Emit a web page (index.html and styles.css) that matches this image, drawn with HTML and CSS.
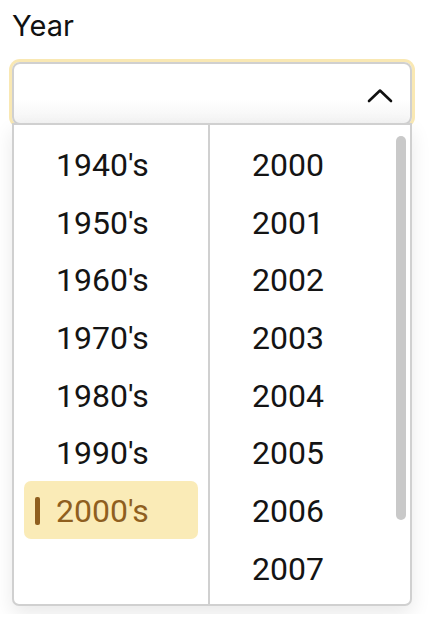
FILE: index.html
```html
<!DOCTYPE html>
<html lang="en">
<head>
    <meta charset="UTF-8">
    <meta name="viewport" content="width=device-width, initial-scale=1.0">
    <title>Year picker</title>
    <link rel="stylesheet" href="styles.css">
</head>
<body>
    <div class="field-label">Year</div>
    <div class="select">
        <div class="select-trigger">
            <svg class="chevron" width="26" height="15" viewBox="0 0 26 15">
                <path d="M2 13 L13 2.5 L24 13" fill="none" stroke="#111" stroke-width="2.6" stroke-linecap="round" stroke-linejoin="round"/>
            </svg>
        </div>

        <div class="select-menu">
            <div class="column decades">
                <div class="option">1940's</div>
                <div class="option">1950's</div>
                <div class="option">1960's</div>
                <div class="option">1970's</div>
                <div class="option">1980's</div>
                <div class="option">1990's</div>
                <div class="option selected">2000's</div>
            </div>
            <div class="years">
                <div class="column year-list">
                    <div class="option">2000</div>
                    <div class="option">2001</div>
                    <div class="option">2002</div>
                    <div class="option">2003</div>
                    <div class="option">2004</div>
                    <div class="option">2005</div>
                    <div class="option">2006</div>
                    <div class="option">2007</div>
                </div>
                <div class="scroll-track">
                    <div class="scroll-thumb"></div>
                </div>
            </div>
        </div>
    </div>
</body>
</html>
```

FILE: styles.css
```css
body {
    font-family: Inter, "Liberation Sans", sans-serif;
    background-color: #ffffff;
    color: #111;
    margin: 0;
    padding: 8px 12px;
}

.field-label {
    font-size: 29px;
    line-height: 36px;
    margin-bottom: 18px;
}

.select {
    width: 400px;
}

.select-trigger {
    display: flex;
    align-items: center;
    justify-content: flex-end;
    box-sizing: border-box;
    height: 63px;
    padding-right: 17px;
    border: 2px solid #d0d0d0;
    border-radius: 8px;
    background: linear-gradient(#ffffff 60%, #f4f4f4);
    box-shadow: 0 0 0 3px #f9e8b3;
}

.chevron {
    display: block;
    margin-top: 3px;
}

/* menu de opcoes sobre o campo */
.select-menu {
    position: relative;
    margin-top: -2px;
    height: 483px;
    box-sizing: border-box;
    display: flex;
    background-color: #ffffff;
    border: 2px solid #d0d0d0;
    border-radius: 0 0 7px 7px;
    box-shadow: 0 8px 20px rgba(0, 0, 0, 0.09);
}

.column {
    padding: 10px;
    font-family: Roboto, "Liberation Sans", sans-serif;
    font-size: 32px;
    color: #141414;
}

.decades {
    width: 174px;
    flex: none;
    border-right: 2px solid #d0d0d0;
}

.years {
    flex: 1;
    display: flex;
    overflow: hidden;
}

.year-list {
    flex: 1;
    padding-right: 0;
}

.scroll-track {
    width: 10px;
    padding: 11px 4px 0 0;
}

.scroll-thumb {
    height: 384px;
    border-radius: 5px;
    background-color: #c9c9c9;
}

.option {
    position: relative;
    height: 57.7px;
    line-height: 61px;
    padding-left: 32px;
    border-radius: 7px;
}

.option.selected {
    background-color: #faebb7;
    color: #8f5f1f;
}

.option.selected::before {
    content: "";
    position: absolute;
    left: 11px;
    top: 16px;
    width: 5px;
    height: 28px;
    border-radius: 2px;
    background-color: #8f5f1f;
}
```
